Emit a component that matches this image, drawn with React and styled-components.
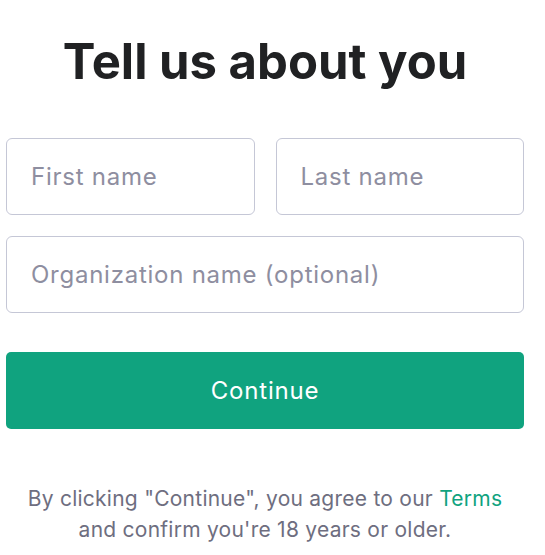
import React from 'react';
import styled, { createGlobalStyle } from 'styled-components';

const GlobalStyle = createGlobalStyle`
  body {
    margin: 0;
    background: #fff;
    font-family: Inter, 'Noto Sans', sans-serif;
  }
`;

const Page = styled.div`
  width: 518px;
  padding: 0 0 0 6px;
  display: flex;
  flex-direction: column;
`;

const Title = styled.h1`
  margin: 32px 0 0;
  text-align: center;
  font-size: 49px;
  font-weight: 700;
  letter-spacing: 0;
  color: #202123;
  line-height: 60px;
`;

const Form = styled.form`
  margin-top: 46px;
  display: flex;
  flex-direction: column;
  gap: 21px;
`;

const Row = styled.div`
  display: grid;
  grid-template-columns: 1fr 1fr;
  gap: 21px;
`;

const Input = styled.input`
  box-sizing: border-box;
  width: 100%;
  height: 77px;
  padding: 0 24px;
  border: 1px solid #c5c7d6;
  border-radius: 6px;
  font-family: inherit;
  font-size: 24px;
  letter-spacing: 0.75px;
  color: #2d333a;
  outline: none;
  &::placeholder {
    color: #8e8ea0;
  }
`;

const Button = styled.button`
  margin-top: 18px;
  height: 77px;
  border: none;
  border-radius: 5px;
  background: #10a37f;
  color: #fff;
  font-family: inherit;
  font-size: 24px;
  letter-spacing: 0.8px;
  cursor: pointer;
`;

const Note = styled.p`
  margin: 54px 0 0;
  text-align: center;
  font-size: 21px;
  letter-spacing: 0.25px;
  line-height: 31px;
  color: #6e6e80;
  & a {
    color: #10a37f;
    text-decoration: none;
  }
`;

export default function App() {
  return (
    <>
      <GlobalStyle />
      <Page>
        <Title>Tell us about you</Title>
        <Form onSubmit={e => e.preventDefault()}>
          <Row>
            <Input placeholder="First name" />
            <Input placeholder="Last name" />
          </Row>
          <Input placeholder="Organization name (optional)" />
          <Button type="submit">Continue</Button>
        </Form>
        <Note>
          By clicking "Continue", you agree to our <a href="#terms">Terms</a>
          <br />
          and confirm you're 18 years or older.
        </Note>
      </Page>
    </>
  );
}
